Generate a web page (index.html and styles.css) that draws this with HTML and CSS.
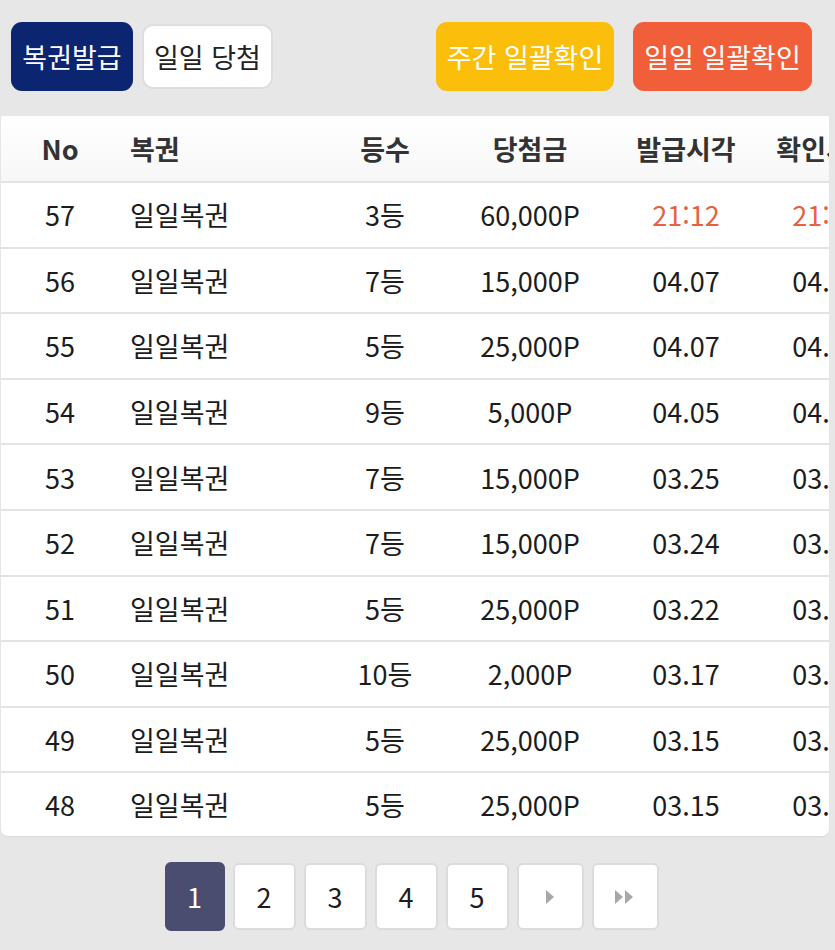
FILE: index.html
```html
<!DOCTYPE html>
<html lang="ko">
<head>
<meta charset="utf-8">
<title>복권</title>
<link rel="stylesheet" href="styles.css">
</head>
<body>
<div class="toolbar">
  <div class="group">
    <button class="btn btn-navy">복권발급</button>
    <button class="btn btn-white">일일 당첨</button>
  </div>
  <div class="group group-right">
    <button class="btn btn-yellow">주간 일괄확인</button>
    <button class="btn btn-orange">일일 일괄확인</button>
  </div>
</div>
<div class="card">
  <table class="list">
    <colgroup>
      <col class="c-no"><col class="c-name"><col class="c-rank"><col class="c-prize"><col class="c-time"><col class="c-check">
    </colgroup>
    <thead>
      <tr><th>No</th><th class="left">복권</th><th>등수</th><th>당첨금</th><th>발급시각</th><th>확인시각</th></tr>
    </thead>
    <tbody>
      <tr><td>57</td><td class="left">일일복권</td><td>3등</td><td>60,000P</td><td class="hot">21:12</td><td class="hot">21:12</td></tr>
      <tr><td>56</td><td class="left">일일복권</td><td>7등</td><td>15,000P</td><td>04.07</td><td>04.07</td></tr>
      <tr><td>55</td><td class="left">일일복권</td><td>5등</td><td>25,000P</td><td>04.07</td><td>04.07</td></tr>
      <tr><td>54</td><td class="left">일일복권</td><td>9등</td><td>5,000P</td><td>04.05</td><td>04.05</td></tr>
      <tr><td>53</td><td class="left">일일복권</td><td>7등</td><td>15,000P</td><td>03.25</td><td>03.25</td></tr>
      <tr><td>52</td><td class="left">일일복권</td><td>7등</td><td>15,000P</td><td>03.24</td><td>03.24</td></tr>
      <tr><td>51</td><td class="left">일일복권</td><td>5등</td><td>25,000P</td><td>03.22</td><td>03.22</td></tr>
      <tr><td>50</td><td class="left">일일복권</td><td>10등</td><td>2,000P</td><td>03.17</td><td>03.17</td></tr>
      <tr><td>49</td><td class="left">일일복권</td><td>5등</td><td>25,000P</td><td>03.15</td><td>03.15</td></tr>
      <tr><td>48</td><td class="left">일일복권</td><td>5등</td><td>25,000P</td><td>03.15</td><td>03.15</td></tr>
    </tbody>
  </table>
</div>
<div class="pager">
  <button class="pg active">1</button>
  <button class="pg">2</button>
  <button class="pg">3</button>
  <button class="pg">4</button>
  <button class="pg">5</button>
  <button class="pg pg-wide"><svg width="12" height="16" viewBox="0 0 12 16"><polygon points="2,1 10,8 2,15" fill="#a8a8a8"/></svg></button>
  <button class="pg pg-wide"><svg width="22" height="16" viewBox="0 0 22 16"><polygon points="1,1 9,8 1,15" fill="#a8a8a8"/><polygon points="11,1 19,8 11,15" fill="#a8a8a8"/></svg></button>
</div>
</body>
</html>
```

FILE: styles.css
```css
* { box-sizing: border-box; }
html, body {
  margin: 0;
  padding: 0;
  background: #e7e7e7;
  font-family: "Noto Sans CJK KR", "Noto Sans", sans-serif;
  color: #1c1c1c;
}
body { width: 835px; height: 950px; overflow: hidden; }

.toolbar {
  display: flex;
  justify-content: space-between;
  padding: 22px 23px 0 11px;
  height: 116px;
}
.group { display: flex; gap: 9px; align-items: flex-start; }
.group-right { gap: 19px; }

.btn {
  font-family: inherit;
  font-size: 27px;
  height: 69px;
  border-radius: 11px;
  border: none;
  padding: 0;
  line-height: 1;
  color: #fff;
  white-space: nowrap;
}
.btn-navy { background: #0b2570; width: 122px; }
.btn-white {
  background: #fff;
  color: #222;
  width: 131px;
  height: 65px;
  margin-top: 2px;
  border: 2px solid #dedede;
}
.btn-yellow { background: #fbbe0b; width: 178px; }
.btn-orange { background: #f05f39; width: 179px; }

.card {
  margin-left: 1px;
  width: 828px;
  background: #fff;
  border-radius: 2px 2px 7px 7px;
  overflow: hidden;
  box-shadow: 0 1px 1px rgba(0,0,0,0.06);
}
.list {
  border-collapse: collapse;
  table-layout: fixed;
  width: 889px;
  font-size: 27px;
}
.c-no { width: 118px; }
.c-name { width: 201px; }
.c-rank { width: 130px; }
.c-prize { width: 160px; }
.c-time { width: 152px; }
.c-check { width: 128px; }

.list th, .list td {
  text-align: center;
  white-space: nowrap;
  padding: 0;
  border-bottom: 2px solid #e3e3e3;
}
.list th {
  height: 66px;
  font-weight: 700;
  color: #333;
  background: linear-gradient(#ffffff, #f7f7f7);
}
.list td {
  height: 65.6px;
  color: #1c1c1c;
}
.list tbody tr:last-child td { border-bottom: none; height: 64px; }
.list .left { text-align: left; padding-left: 11px; }
.list .hot { color: #e8613c; }

.pager {
  display: flex;
  justify-content: center;
  gap: 8px;
  padding-top: 27px;
  padding-right: 12px;
}
.pg {
  font-family: inherit;
  font-size: 27px;
  width: 63px;
  height: 67px;
  background: #fff;
  border: 2px solid #dcdcdc;
  border-radius: 6px;
  color: #1c1c1c;
  display: flex;
  align-items: center;
  justify-content: center;
  padding: 0;
}
.pg.active {
  background: #4b4d70;
  border-color: #4b4d70;
  color: #fff;
  width: 60px;
  height: 69px;
  margin-top: -1px;
}
.pg-wide { width: 67px; }
```
